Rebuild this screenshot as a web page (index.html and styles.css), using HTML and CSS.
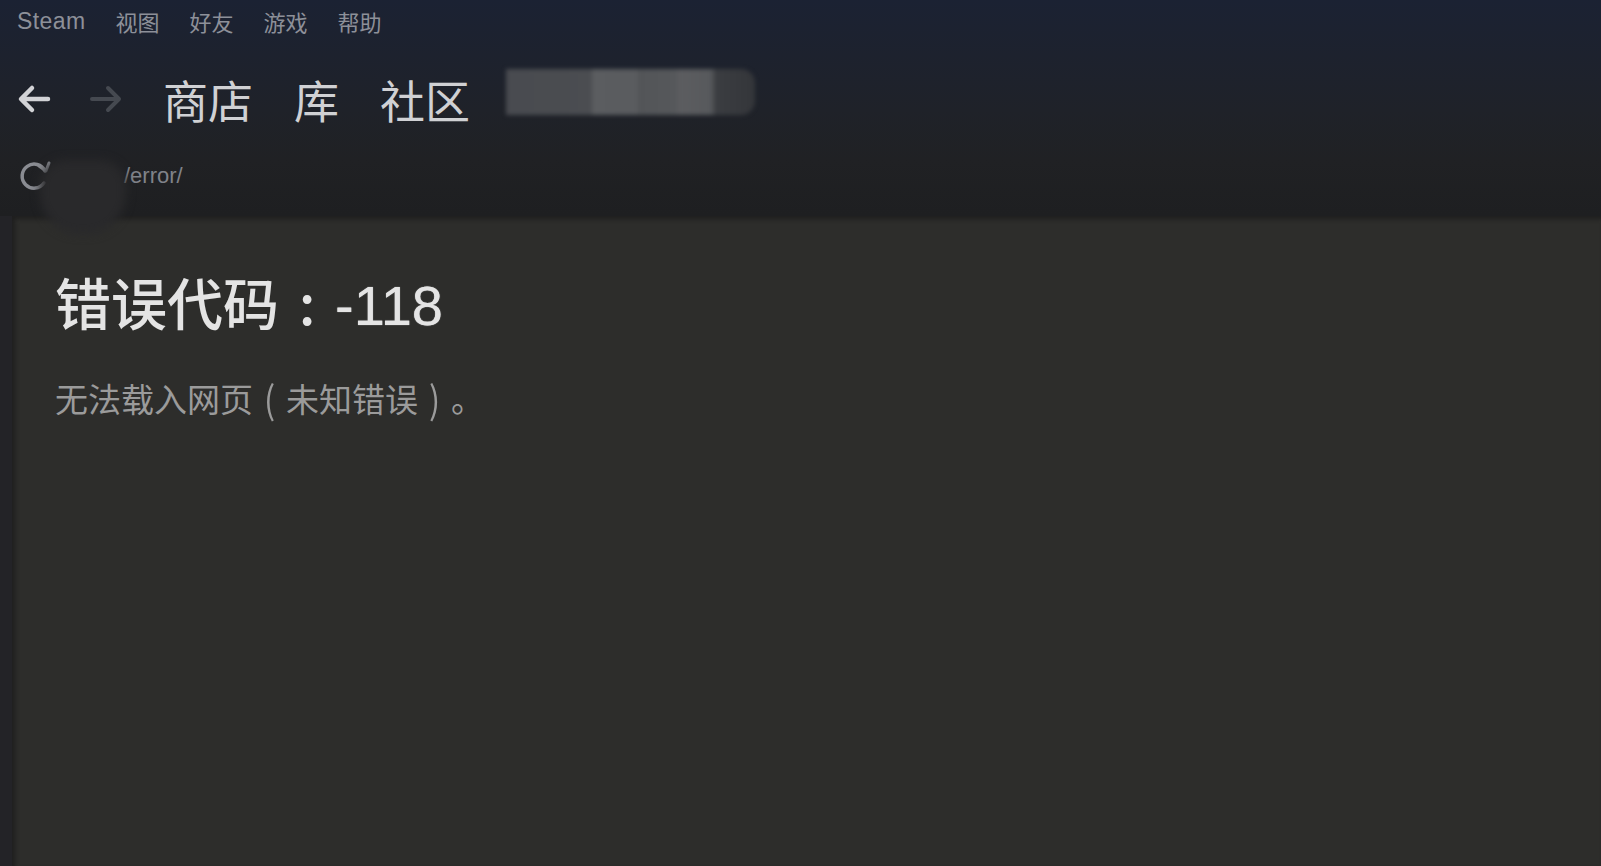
FILE: index.html
```html
<!DOCTYPE html>
<html lang="zh-CN">
<head>
    <meta charset="UTF-8">
    <title>Steam</title>
    <link rel="stylesheet" href="styles.css">
</head>
<body>

<div class="menu">
    <span class="menu-steam">Steam</span>
    <span>视图</span>
    <span>好友</span>
    <span>游戏</span>
    <span>帮助</span>
</div>

<div class="nav">
    <div class="arrows">
        <svg class="arrow back" width="34" height="30" viewBox="0 0 34 30">
            <path d="M31 15 H5 M15 4 L4 15 L15 26" fill="none" stroke="currentColor" stroke-width="4.5" stroke-linecap="round" stroke-linejoin="round"/>
        </svg>
        <svg class="arrow fwd" width="34" height="30" viewBox="0 0 34 30">
            <path d="M3 15 H29 M19 4 L30 15 L19 26" fill="none" stroke="currentColor" stroke-width="4" stroke-linecap="round" stroke-linejoin="round"/>
        </svg>
    </div>
    <a class="tab">商店</a>
    <a class="tab">库</a>
    <a class="tab">社区</a>
    <div class="user-blur"></div>
</div>

<div class="urlbar">
    <svg class="reload" width="34" height="34" viewBox="0 0 34 34">
        <path d="M27 12 A12 12 0 1 0 26 24" fill="none" stroke="currentColor" stroke-width="3.5" stroke-linecap="round"/>
        <path d="M21 7 L28 12 L31 4" fill="none" stroke="currentColor" stroke-width="3" stroke-linecap="round" stroke-linejoin="round"/>
    </svg>
    <span class="url">/error/</span>
</div>

<div class="url-blot"></div>

<div class="page">
    <div class="panel">
        <h1>错误代码<span class="punc">:</span><span class="code">-118</span></h1>
        <p>无法载入网页<span class="punc paren">(</span>未知错误<span class="punc paren">)</span>。</p>
    </div>
</div>

</body>
</html>
```

FILE: styles.css
```css
body {
    margin: 0;
    height: 866px;
    overflow: hidden;
    font-family: "Liberation Sans", "Noto Sans CJK SC", sans-serif;
    background: linear-gradient(to bottom, #1b2233 0px, #1f2229 110px, #202124 160px, #1e1f21 214px);
    display: flex;
    flex-direction: column;
}
.menu {
    height: 42px;
    display: flex;
    align-items: center;
    gap: 30px;
    padding-left: 17px;
    font-size: 22px;
    color: #8d9099;
}
.menu-steam {
    font-size: 23px;
    letter-spacing: 0.4px;
}
.nav {
    height: 114px;
    display: flex;
    align-items: center;
}
.arrows {
    display: flex;
    gap: 38px;
    padding-left: 17px;
    width: 146px;
}
.arrow.back {
    color: #d2d3d6;
}
.arrow.fwd {
    color: #454950;
}
.tab {
    font-family: "Noto Sans CJK SC", sans-serif;
    font-size: 45px;
    color: #d0d1d4;
    margin-right: 41px;
    line-height: 1;
}
.user-blur {
    width: 249px;
    height: 46px;
    margin-left: -5px;
    margin-top: -14px;
    border-radius: 0 14px 14px 0;
    background: linear-gradient(to right, #494b50 0, #4b4d51 85px, #5b5d60 87px, #5a5c5f 130px, #535558 133px, #56585b 170px, #5c5d60 173px, #57595c 205px, #3b3d41 210px, #34363a 249px);
    filter: blur(2px);
}
.urlbar {
    height: 40px;
    padding-bottom: 20px;
    display: flex;
    align-items: center;
    padding-left: 18px;
}
.reload {
    color: #8a8c92;
}
.url {
    margin-left: 72px;
    font-size: 22px;
    color: #80838a;
}
.url-blot {
    position: absolute;
    left: 40px;
    top: 160px;
    width: 86px;
    height: 74px;
    border-radius: 26px 26px 40px 40px;
    background: #29292b;
    filter: blur(5px);
}
.page {
    flex: 1;
    display: flex;
    background: #232327;
}
.panel {
    flex: 1;
    margin-left: 12px;
    padding: 51px 0 0 43px;
    background: #2d2d2b;
    box-shadow: inset 3px 3px 4px #1f1f1f;
    font-family: "Noto Sans CJK SC", sans-serif;
}
h1 {
    margin: 0;
    font-size: 56px;
    line-height: 67px;
    font-weight: 500;
    color: #e4e4e4;
}
.punc {
    display: inline-block;
    width: 1em;
    text-align: center;
}
.paren {
    transform: scaleY(1.15);
}
.code {
    font-family: "Liberation Sans", sans-serif;
    font-weight: normal;
    text-shadow: 0 0 1px #e4e4e4;
}
p {
    margin: 39px 0 0;
    font-size: 33px;
    line-height: 40px;
    color: #9b9b9b;
}
```
